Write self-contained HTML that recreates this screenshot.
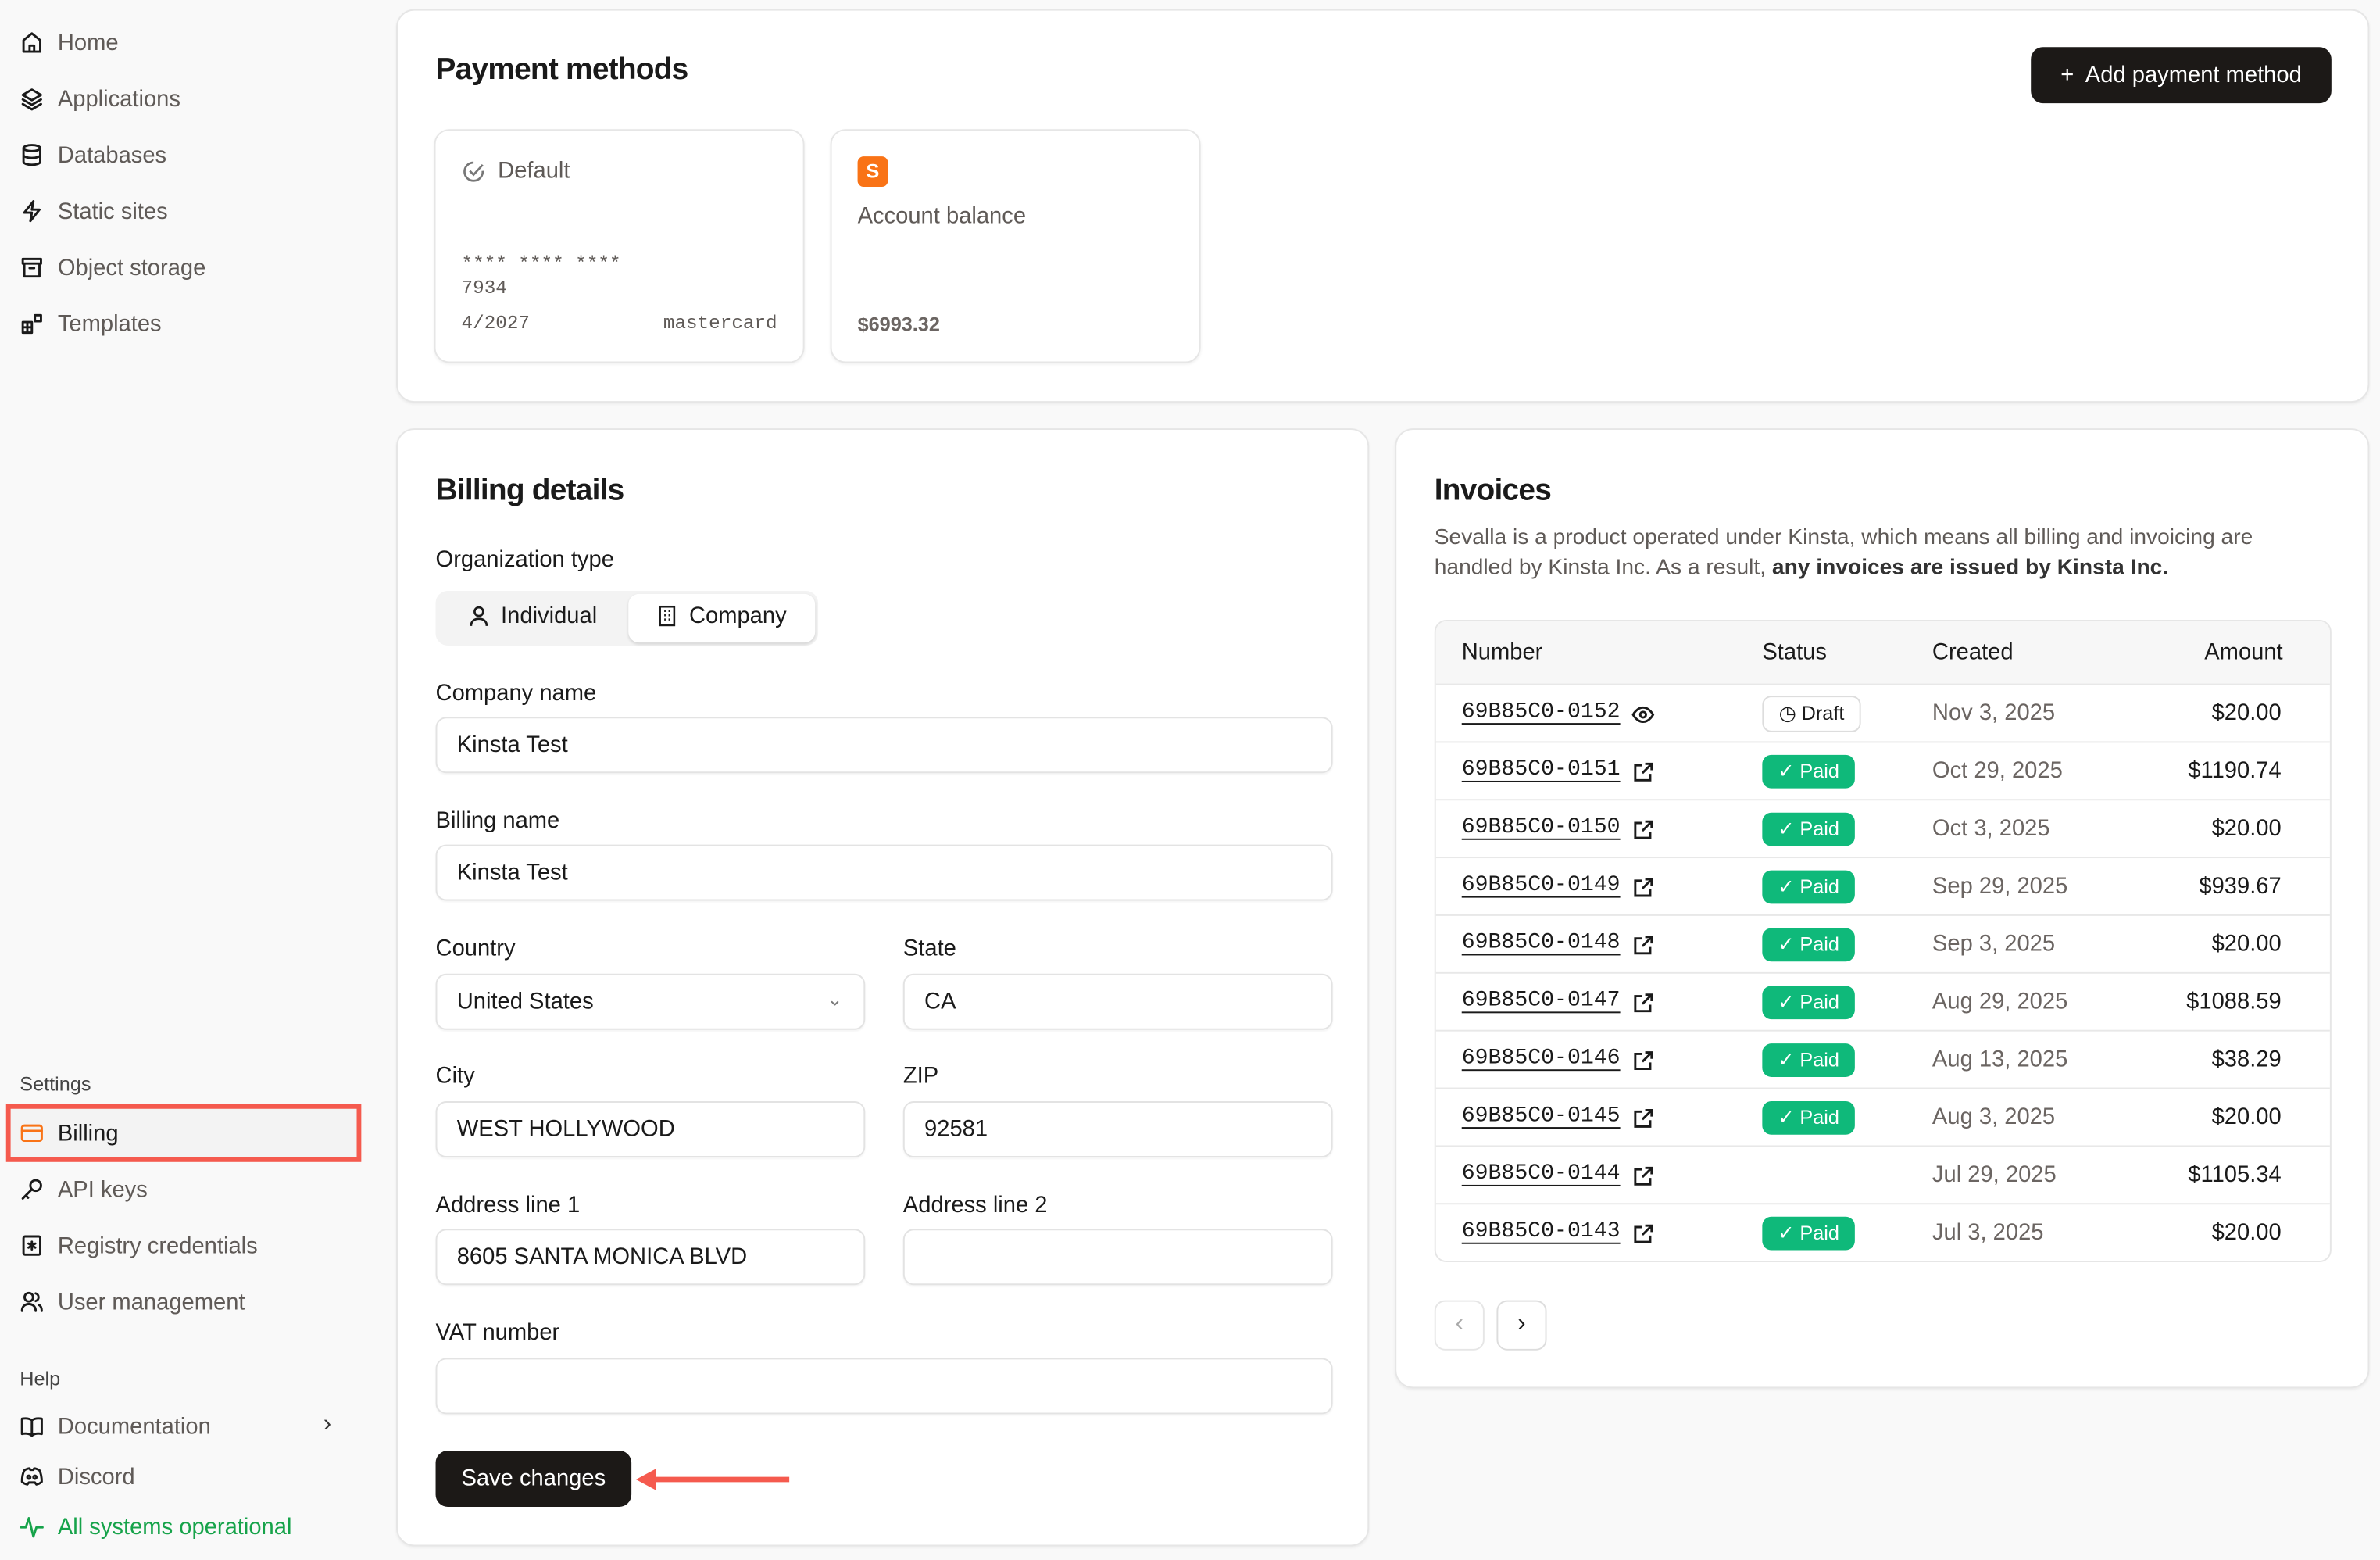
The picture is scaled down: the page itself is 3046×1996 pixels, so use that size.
<!DOCTYPE html>
<html><head><meta charset="utf-8"><style>
*{box-sizing:border-box;margin:0;padding:0}
html,body{width:3046px;height:1996px;overflow:hidden;background:#f9f9f9}
#w{position:absolute;left:0;top:0;width:1568px;height:1027px;transform:scale(1.9426,1.9435);transform-origin:0 0;font-family:"Liberation Sans",sans-serif;color:#1a1a1a}
.a{position:absolute}
.nav{position:absolute;left:13px;font-size:15px;color:#5f5a57;display:flex;align-items:center;height:20px}
.nav svg{width:16px;height:16px;margin-right:9px;fill:none;stroke:#1a1a1a;stroke-width:1.5;stroke-linecap:round;stroke-linejoin:round}
.card{position:absolute;background:#fff;border:1px solid #e6e6e6;border-radius:12px;box-shadow:0 1px 2px rgba(0,0,0,.06)}
.h{font-size:20px;font-weight:600;letter-spacing:-.4px}
.lbl{position:absolute;font-size:15px;font-weight:500}
.inp{position:absolute;height:37px;border:1px solid #e3e3e3;border-radius:7px;background:#fff;font-size:15px;padding-left:13px;line-height:35px;box-shadow:0 1px 1px rgba(0,0,0,.04)}
.row{position:absolute;left:0;width:590px;height:38px;border-top:1px solid #e8e8e8;font-size:15px}
.row>*{position:absolute;top:0;line-height:37px}
.num{left:17px;font-family:"Liberation Mono",monospace;font-size:14.5px;text-decoration:underline;text-underline-offset:4px}
.num svg{position:absolute;left:112px;top:12px;width:15px;height:15px;fill:none;stroke:#1a1a1a;stroke-width:1.6}
.paid{left:215px;top:8px!important;height:22px;width:61px;border-radius:6px;background:#0fb97a;color:#fff;font-size:13px;line-height:22px!important;text-align:center}
.dt{left:327px;color:#6b6562}
.am{right:33px}
</style></head><body><div id="w">

<div class="nav" style="top:18px"><svg viewBox="0 0 16 16"><path d="M2.5 14V6.5L8 2l5.5 4.5V14zM6.5 14V10h3v4"/></svg>Home</div>
<div class="nav" style="top:55px"><svg viewBox="0 0 16 16"><path d="M8 2l6 3.5-6 3.5-6-3.5zM2 8.5l6 3.5 6-3.5M2 11.5l6 3.5 6-3.5"/></svg>Applications</div>
<div class="nav" style="top:92px"><svg viewBox="0 0 16 16"><ellipse cx="8" cy="3.5" rx="5.5" ry="2"/><path d="M2.5 3.5v9c0 1.1 2.5 2 5.5 2s5.5-.9 5.5-2v-9M2.5 8c0 1.1 2.5 2 5.5 2s5.5-.9 5.5-2"/></svg>Databases</div>
<div class="nav" style="top:129px"><svg viewBox="0 0 16 16"><path d="M9 1.5L3 9h5l-1 5.5L13 7H8z"/></svg>Static sites</div>
<div class="nav" style="top:166px"><svg viewBox="0 0 16 16"><path d="M2 2.5h12v3H2zM3 5.5V14h10V5.5M6.5 8.5h3"/></svg>Object storage</div>
<div class="nav" style="top:203px"><svg viewBox="0 0 16 16"><path d="M2 7h6v7H2zM2 10.5h6M5 7v7M10 2.5h4v4h-4z"/></svg>Templates</div>

<div class="a" style="left:13px;top:706px;font-size:13px;color:#444;font-weight:500">Settings</div>
<div class="a" style="left:4px;top:727px;width:234px;height:38px;border:3.5px solid #f55a4e;background:#f3f3f3"></div>
<div class="nav" style="top:736px;color:#1a1a1a"><svg viewBox="0 0 16 16" style="stroke:#f97316"><rect x="1.5" y="3" width="13" height="10" rx="1.5"/><path d="M1.5 6.5h13"/></svg>Billing</div>
<div class="nav" style="top:773px"><svg viewBox="0 0 16 16"><circle cx="10.5" cy="5.5" r="3.5"/><path d="M8 8l-6 6M4 12l1.5 1.5"/></svg>API keys</div>
<div class="nav" style="top:810px"><svg viewBox="0 0 16 16"><rect x="2.5" y="2" width="11" height="12" rx="1"/><path d="M8 5.5v5M5.8 6.7l4.4 2.6M10.2 6.7l-4.4 2.6"/></svg>Registry credentials</div>
<div class="nav" style="top:847px"><svg viewBox="0 0 16 16"><circle cx="6" cy="5" r="2.8"/><path d="M1.5 14c0-3 2-4.5 4.5-4.5s4.5 1.5 4.5 4.5M10.5 2.5a2.6 2.6 0 010 5M12.5 10c1.3.6 2 2 2 4"/></svg>User management</div>
<div class="a" style="left:13px;top:900px;font-size:13px;color:#444;font-weight:500">Help</div>
<div class="nav" style="top:929px"><svg viewBox="0 0 16 16"><path d="M8 4v10.5M8 4C6.5 3 4 2.5 1.5 3v10c2.5-.5 5 0 6.5 1 1.5-1 4-1.5 6.5-1V3C12 2.5 9.5 3 8 4z"/></svg>Documentation</div>
<div class="a" style="left:213px;top:929px;font-size:16px;color:#333">›</div>
<div class="nav" style="top:962px"><svg viewBox="0 0 16 16"><path d="M3 4c1.5-1 3-1.3 3.5-1.3l.5 1h2l.5-1c.5 0 2 .3 3.5 1.3 1 2 1.5 4.5 1.5 7.5-1 1-2.5 1.6-3.5 1.8L10 12H6l-1 1.3c-1-.2-2.5-.8-3.5-1.8 0-3 .5-5.5 1.5-7.5z"/><circle cx="6" cy="8.5" r="1"/><circle cx="10" cy="8.5" r="1"/></svg>Discord</div>
<div class="nav" style="top:995px;color:#16a34a"><svg viewBox="0 0 16 16" style="stroke:#16a34a"><path d="M1 8.5h3l2-6 3 12 2-6h4"/></svg>All systems operational</div>

<!-- Payment methods -->
<div class="card" style="left:261px;top:6px;width:1300px;height:259px">
 <div class="a h" style="left:25px;top:28px">Payment methods</div>
 <div class="a" style="left:1076px;top:24px;width:198px;height:37px;background:#1c1917;border-radius:8px;color:#fff;font-size:15px;font-weight:500;line-height:37px;text-align:center">+&nbsp; Add payment method</div>
 <div class="card" style="left:24px;top:78px;width:244px;height:154px;border-radius:10px">
  <div class="a" style="left:17px;top:18px;font-size:15px;color:#5f5a57;display:flex;align-items:center"><svg width="16" height="16" viewBox="0 0 16 16" style="margin-right:8px;fill:none;stroke:#777;stroke-width:1.4"><path d="M14 7.5A6 6 0 118 2M5.5 7.5l2.5 2.5L14 3.5"/></svg>Default</div>
  <div class="a" style="left:17px;top:80px;font-family:'Liberation Mono',monospace;font-size:12.5px;color:#5f5a57;line-height:16px">**** **** ****<br>7934</div>
  <div class="a" style="left:17px;top:120px;font-family:'Liberation Mono',monospace;font-size:12.5px;color:#5f5a57">4/2027</div>
  <div class="a" style="right:17px;top:120px;font-family:'Liberation Mono',monospace;font-size:12.5px;color:#5f5a57">mastercard</div>
 </div>
 <div class="card" style="left:285px;top:78px;width:244px;height:154px;border-radius:10px">
  <div class="a" style="left:17px;top:17px;width:20px;height:20px;background:#f97316;border-radius:4px;color:#fff;font-size:13px;font-weight:700;text-align:center;line-height:20px">S</div>
  <div class="a" style="left:17px;top:48px;font-size:15px;color:#5f5a57">Account balance</div>
  <div class="a" style="left:17px;top:120px;font-size:13px;font-weight:700;color:#6b6562">$6993.32</div>
 </div>
</div>

<!-- Billing details -->
<div class="card" style="left:261px;top:282px;width:641px;height:736px">
 <div class="a h" style="left:25px;top:29px">Billing details</div>
 <div class="lbl" style="left:25px;top:77px">Organization type</div>
 <div class="a" style="left:25px;top:106px;width:252px;height:36px;background:#f3f3f3;border-radius:8px"></div>
 <div class="a" style="left:46px;top:114px;font-size:15px;font-weight:500;display:flex;align-items:center"><svg width="15" height="15" viewBox="0 0 16 16" style="margin-right:7px;fill:none;stroke:#1a1a1a;stroke-width:1.5"><circle cx="8" cy="5" r="3"/><path d="M2.5 15c0-3.5 2.5-5 5.5-5s5.5 1.5 5.5 5"/></svg>Individual</div>
 <div class="a" style="left:152px;top:108px;width:123px;height:32px;background:#fff;border-radius:7px;box-shadow:0 1px 2px rgba(0,0,0,.12)"></div>
 <div class="a" style="left:170px;top:114px;font-size:15px;font-weight:500;display:flex;align-items:center"><svg width="15" height="15" viewBox="0 0 16 16" style="margin-right:7px;fill:none;stroke:#1a1a1a;stroke-width:1.4"><rect x="3" y="1.5" width="10" height="13"/><path d="M6 4.5h1M9 4.5h1M6 7.5h1M9 7.5h1M6 10.5h1M9 10.5h1"/></svg>Company</div>
 <div class="lbl" style="left:25px;top:165px">Company name</div>
 <div class="inp" style="left:25px;top:189px;width:591px">Kinsta Test</div>
 <div class="lbl" style="left:25px;top:249px">Billing name</div>
 <div class="inp" style="left:25px;top:273px;width:591px">Kinsta Test</div>
 <div class="lbl" style="left:25px;top:333px">Country</div><div class="lbl" style="left:333px;top:333px">State</div>
 <div class="inp" style="left:25px;top:358px;width:283px">United States<span style="position:absolute;right:14px;top:-1px;color:#777;font-size:12px">⌄</span></div>
 <div class="inp" style="left:333px;top:358px;width:283px">CA</div>
 <div class="lbl" style="left:25px;top:417px">City</div><div class="lbl" style="left:333px;top:417px">ZIP</div>
 <div class="inp" style="left:25px;top:442px;width:283px">WEST HOLLYWOOD</div>
 <div class="inp" style="left:333px;top:442px;width:283px">92581</div>
 <div class="lbl" style="left:25px;top:502px">Address line 1</div><div class="lbl" style="left:333px;top:502px">Address line 2</div>
 <div class="inp" style="left:25px;top:526px;width:283px">8605 SANTA MONICA BLVD</div>
 <div class="inp" style="left:333px;top:526px;width:283px"></div>
 <div class="lbl" style="left:25px;top:586px">VAT number</div>
 <div class="inp" style="left:25px;top:611px;width:591px"></div>
 <div class="a" style="left:25px;top:672px;width:129px;height:37px;background:#1c1917;border-radius:8px;color:#fff;font-size:15px;font-weight:500;line-height:37px;text-align:center">Save changes</div>
 <svg class="a" style="left:156px;top:682px" width="104" height="18" viewBox="0 0 104 18"><path d="M102 9H8" stroke="#f55a4e" stroke-width="3.5"/><path d="M1 9l13-7v14z" fill="#f55a4e"/></svg>
</div>

<!-- Invoices -->
<div class="card" style="left:919px;top:282px;width:642px;height:632px">
 <div class="a h" style="left:25px;top:29px">Invoices</div>
 <div class="a" style="left:25px;top:61px;width:590px;font-size:14.5px;line-height:20px;color:#5f5a57">Sevalla is a product operated under Kinsta, which means all billing and invoicing are handled by Kinsta Inc. As a result, <b style="color:#333">any invoices are issued by Kinsta Inc.</b></div>
 <div class="a" style="left:25px;top:125px;width:591px;height:423px;border:1px solid #e6e6e6;border-radius:8px;overflow:hidden">
  <div class="a" style="left:0;top:0;width:591px;height:41px;background:#f7f7f7;font-size:15px;font-weight:500">
   <span class="a" style="left:17px;top:12px">Number</span><span class="a" style="left:215px;top:12px">Status</span><span class="a" style="left:327px;top:12px">Created</span><span class="a" style="right:33px;top:12px">Amount</span></div>
  <div class="row" style="top:41px"><span class="num">69B85C0-0152<svg viewBox="0 0 16 16"><path d="M1 8s2.5-5 7-5 7 5 7 5-2.5 5-7 5-7-5-7-5z"/><circle cx="8" cy="8" r="2"/></svg></span><span style="left:215px;top:7px;height:24px;width:65px;border:1px solid #ddd;border-radius:6px;font-size:13px;line-height:22px;text-align:center">◷ Draft</span><span class="dt">Nov 3, 2025</span><span class="am">$20.00</span></div>
  <div class="row" style="top:79px"><span class="num">69B85C0-0151<svg viewBox="0 0 16 16"><path d="M7 3H2.5v10.5H13V9M9.5 2H14v4.5M14 2L7.5 8.5"/></svg></span><span class="paid">✓ Paid</span><span class="dt">Oct 29, 2025</span><span class="am">$1190.74</span></div>
  <div class="row" style="top:117px"><span class="num">69B85C0-0150<svg viewBox="0 0 16 16"><path d="M7 3H2.5v10.5H13V9M9.5 2H14v4.5M14 2L7.5 8.5"/></svg></span><span class="paid">✓ Paid</span><span class="dt">Oct 3, 2025</span><span class="am">$20.00</span></div>
  <div class="row" style="top:155px"><span class="num">69B85C0-0149<svg viewBox="0 0 16 16"><path d="M7 3H2.5v10.5H13V9M9.5 2H14v4.5M14 2L7.5 8.5"/></svg></span><span class="paid">✓ Paid</span><span class="dt">Sep 29, 2025</span><span class="am">$939.67</span></div>
  <div class="row" style="top:193px"><span class="num">69B85C0-0148<svg viewBox="0 0 16 16"><path d="M7 3H2.5v10.5H13V9M9.5 2H14v4.5M14 2L7.5 8.5"/></svg></span><span class="paid">✓ Paid</span><span class="dt">Sep 3, 2025</span><span class="am">$20.00</span></div>
  <div class="row" style="top:231px"><span class="num">69B85C0-0147<svg viewBox="0 0 16 16"><path d="M7 3H2.5v10.5H13V9M9.5 2H14v4.5M14 2L7.5 8.5"/></svg></span><span class="paid">✓ Paid</span><span class="dt">Aug 29, 2025</span><span class="am">$1088.59</span></div>
  <div class="row" style="top:269px"><span class="num">69B85C0-0146<svg viewBox="0 0 16 16"><path d="M7 3H2.5v10.5H13V9M9.5 2H14v4.5M14 2L7.5 8.5"/></svg></span><span class="paid">✓ Paid</span><span class="dt">Aug 13, 2025</span><span class="am">$38.29</span></div>
  <div class="row" style="top:307px"><span class="num">69B85C0-0145<svg viewBox="0 0 16 16"><path d="M7 3H2.5v10.5H13V9M9.5 2H14v4.5M14 2L7.5 8.5"/></svg></span><span class="paid">✓ Paid</span><span class="dt">Aug 3, 2025</span><span class="am">$20.00</span></div>
  <div class="row" style="top:345px"><span class="num">69B85C0-0144<svg viewBox="0 0 16 16"><path d="M7 3H2.5v10.5H13V9M9.5 2H14v4.5M14 2L7.5 8.5"/></svg></span><span class="dt">Jul 29, 2025</span><span class="am">$1105.34</span></div>
  <div class="row" style="top:383px"><span class="num">69B85C0-0143<svg viewBox="0 0 16 16"><path d="M7 3H2.5v10.5H13V9M9.5 2H14v4.5M14 2L7.5 8.5"/></svg></span><span class="paid">✓ Paid</span><span class="dt">Jul 3, 2025</span><span class="am">$20.00</span></div>
 </div>
 <div class="a" style="left:25px;top:573px;width:33px;height:33px;border:1px solid #e6e6e6;border-radius:7px;text-align:center;line-height:30px;color:#aaa;font-size:16px">‹</div>
 <div class="a" style="left:66px;top:573px;width:33px;height:33px;border:1px solid #ddd;border-radius:7px;text-align:center;line-height:30px;color:#1a1a1a;font-size:16px;background:#fff">›</div>
</div>

</div></body></html>
